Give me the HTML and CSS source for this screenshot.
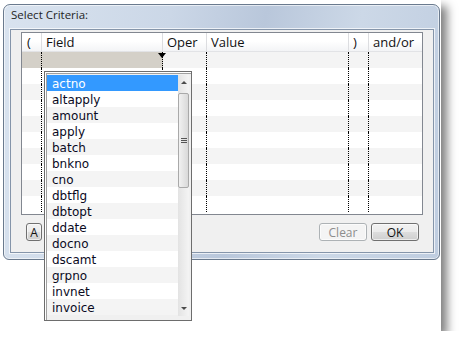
FILE: index.html
```html
<!DOCTYPE html>
<html lang="en">
<head>
  <meta charset="UTF-8" />
  <title>Select Criteria</title>
  <link rel="stylesheet" href="styles.css">
</head>
<body>

  <div class="shot">
    <div class="window">
      <div class="title">Select Criteria:</div>

      <div class="client">
        <div class="grid">
          <div class="row head">
            <div class="cell">(</div>
            <div class="cell">Field</div>
            <div class="cell">Oper</div>
            <div class="cell">Value</div>
            <div class="cell">)</div>
            <div class="cell">and/or</div>
          </div>
          <div class="row alt current">
            <div class="cell pick"></div><div class="cell pick arrow"></div><div class="cell"></div><div class="cell"></div><div class="cell"></div><div class="cell"></div>
          </div>
          <div class="row"><div class="cell"></div><div class="cell"></div><div class="cell"></div><div class="cell"></div><div class="cell"></div><div class="cell"></div></div>
          <div class="row alt"><div class="cell"></div><div class="cell"></div><div class="cell"></div><div class="cell"></div><div class="cell"></div><div class="cell"></div></div>
          <div class="row"><div class="cell"></div><div class="cell"></div><div class="cell"></div><div class="cell"></div><div class="cell"></div><div class="cell"></div></div>
          <div class="row alt"><div class="cell"></div><div class="cell"></div><div class="cell"></div><div class="cell"></div><div class="cell"></div><div class="cell"></div></div>
          <div class="row"><div class="cell"></div><div class="cell"></div><div class="cell"></div><div class="cell"></div><div class="cell"></div><div class="cell"></div></div>
          <div class="row alt"><div class="cell"></div><div class="cell"></div><div class="cell"></div><div class="cell"></div><div class="cell"></div><div class="cell"></div></div>
          <div class="row"><div class="cell"></div><div class="cell"></div><div class="cell"></div><div class="cell"></div><div class="cell"></div><div class="cell"></div></div>
          <div class="row alt"><div class="cell"></div><div class="cell"></div><div class="cell"></div><div class="cell"></div><div class="cell"></div><div class="cell"></div></div>
          <div class="row"><div class="cell"></div><div class="cell"></div><div class="cell"></div><div class="cell"></div><div class="cell"></div><div class="cell"></div></div>
        </div>

        <div class="buttons">
          <button class="btn small">A</button>
          <span class="spacer"></span>
          <button class="btn" disabled>Clear</button>
          <button class="btn">OK</button>
        </div>
      </div>
    </div>

    <!-- field picker, open over the grid -->
    <div class="dropdown">
      <ul class="list">
        <li class="selected">actno</li>
        <li>altapply</li>
        <li>amount</li>
        <li>apply</li>
        <li>batch</li>
        <li>bnkno</li>
        <li>cno</li>
        <li>dbtflg</li>
        <li>dbtopt</li>
        <li>ddate</li>
        <li>docno</li>
        <li>dscamt</li>
        <li>grpno</li>
        <li>invnet</li>
        <li>invoice</li>
      </ul>
      <div class="scrollbar">
        <div class="sb-up"></div>
        <div class="thumb"><span class="grip"></span></div>
        <div class="sb-track"></div>
        <div class="sb-down"></div>
      </div>
    </div>
  </div>

</body>
</html>
```

FILE: styles.css
```css
:root {
  --text: #1b1b1b;
  --client: #f0f0f0;
  --stripe: #f4f4f4;
  --pick: #d4d0c8;
  --select: #3399ff;
}

* {
  box-sizing: border-box;
  margin: 0;
  padding: 0;
}

body {
  background: #fff;
  font-family: "Open Sans", "DejaVu Sans", sans-serif;
  font-size: 12px;
  color: var(--text);
}

/* captured area, with the screenshot shadow */
.shot {
  position: relative;
  width: 441px;
  height: 331px;
  padding: 4px 0 0 3px;
  background: #fff;
  box-shadow: 6px 6px 9px rgba(0, 0, 0, 0.5);
}

/* === window frame === */
.window {
  width: 437px;
  height: 256px;
  display: flex;
  flex-direction: column;
  border: 1px solid #6a7a8e;
  border-radius: 7px 7px 6px 6px;
  background: linear-gradient(100deg, #d9e3ef 0%, #cbd7e7 35%, #b9c7db 55%, #ccd8e7 75%, #bfcde0 100%);
  box-shadow: inset 0 0 0 1px rgba(255, 255, 255, 0.6);
}

.title {
  height: 24px;
  padding: 2px 7px 0;
  line-height: 16px;
  font-size: 11.5px;
  color: #1e1e1e;
}

.client {
  flex: 1;
  margin: 0 5px 6px 6px;
  padding: 2px 10px 0;
  display: flex;
  flex-direction: column;
  border: 1px solid #8595aa;
  background: var(--client);
  box-shadow: 0 0 0 1px rgba(255, 255, 255, 0.7);
}

/* === criteria grid === */
.grid {
  border: 1px solid #828790;
  background: #fff;
  padding-bottom: 2px;
}

.row {
  display: grid;
  grid-template-columns: 20px 121px 44px 142px 20px 53px;
  height: 16px;
}

.row.alt {
  background: var(--stripe);
}

.row .cell {
  border-right: 1px dotted #000;
}

.row .cell:last-child {
  border-right: 0;
}

.row.head {
  height: 19px;
  background: linear-gradient(#fff 0%, #fff 45%, #f3f4f6 100%);
  border-bottom: 1px solid #e2e3e6;
}

.row.head .cell {
  border-right: 1px solid #dcdde0;
  padding-left: 4px;
  line-height: 18px;
  font-size: 13px;
  color: #111;
}

.row.head .cell:first-child {
  padding-left: 5px;
}

.row.head .cell:last-child {
  border-right: 0;
}

.cell.pick {
  background: var(--pick);
}

.cell.arrow {
  position: relative;
}

.cell.arrow::after {
  content: "";
  position: absolute;
  right: -4px;
  top: 1px;
  border-left: 4px solid transparent;
  border-right: 4px solid transparent;
  border-top: 5px solid #000;
}

/* === bottom buttons === */
.buttons {
  display: flex;
  gap: 4px;
  height: 18px;
  margin: 8px 4px 0 5px;
}

.spacer {
  flex: 1;
}

.btn {
  width: 48px;
  height: 18px;
  font-family: "Open Sans", "DejaVu Sans", sans-serif;
  font-size: 12px;
  line-height: 15px;
  color: #111;
  border: 1px solid #707070;
  border-radius: 3px;
  background: linear-gradient(#f2f2f2 0%, #ebebeb 50%, #dddddd 51%, #cfcfcf 100%);
  box-shadow: inset 0 0 0 1px rgba(255, 255, 255, 0.6);
}

.btn.small {
  width: 16px;
}

.btn:disabled {
  color: #8d8d8d;
  border-color: #adb2b5;
  background: #f4f4f4;
}

/* === dropdown list === */
.dropdown {
  position: absolute;
  left: 44px;
  top: 71px;
  width: 148px;
  height: 250px;
  display: flex;
  padding: 3px 2px 4px 2px;
  border: 1px solid #6d6d6d;
  background: #f0f0f0;
  box-shadow: inset 1px 1px 0 #fff, inset 2px 2px 0 #a0a0a0;
}

.list {
  list-style: none;
  width: 131px;
  font-family: "DejaVu Sans", sans-serif;
  font-size: 12px;
  color: #0a0a1e;
}

.list li {
  height: 16px;
  line-height: 16px;
  padding: 1px 0 0 5px;
  background: #fff;
}

.list li:nth-child(odd) {
  background: var(--stripe);
}

.list li.selected {
  background: var(--select);
  color: #fff;
}

.scrollbar {
  width: 11px;
  display: flex;
  flex-direction: column;
  background: linear-gradient(to right, #e3e3e3, #f4f4f4);
}

.sb-up,
.sb-down {
  height: 17px;
  position: relative;
}

.sb-up::after,
.sb-down::after {
  content: "";
  position: absolute;
  left: 3px;
  border-left: 3px solid transparent;
  border-right: 3px solid transparent;
}

.sb-up::after {
  top: 6px;
  border-bottom: 3px solid #4a4a4a;
}

.sb-down::after {
  bottom: 6px;
  border-top: 3px solid #4a4a4a;
}

.thumb {
  height: 95px;
  margin-top: 1px;
  display: flex;
  align-items: center;
  justify-content: center;
  border: 1px solid #a9a9a9;
  border-radius: 2px;
  background: linear-gradient(to right, #f1f1f1, #d9d9d9);
}

.grip {
  width: 6px;
  height: 5px;
  border-top: 1px solid #555;
  border-bottom: 1px solid #555;
  background: linear-gradient(transparent 1px, #555 1px, #555 2px, transparent 2px);
}

.sb-track {
  flex: 1;
}
```
